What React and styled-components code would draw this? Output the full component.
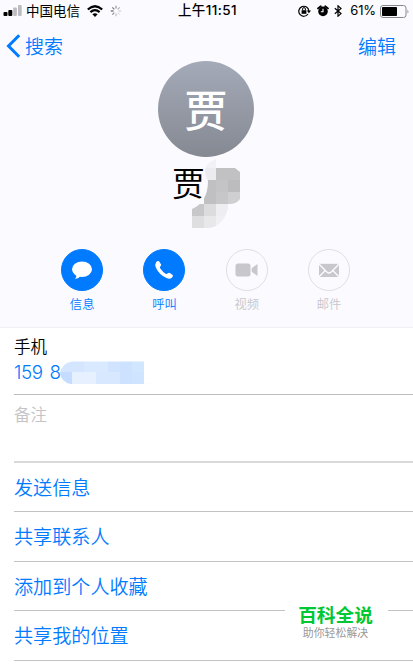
import React from 'react'
import styled, { createGlobalStyle } from 'styled-components'

const GlobalStyle = createGlobalStyle`
    * {
      box-sizing: border-box;
    }
    body {
      margin: 0;
      background: #fff;
      overflow: hidden;
      font-family: 'Liberation Sans', 'Noto Sans CJK SC', sans-serif;
    }
`

const Page = styled.div`
    width: 413px;
    height: 669px;
    overflow: hidden;
    background: #fff;
`

const Header = styled.header`
    height: 328px;
    background: #fafaff;
    border-bottom: 1px solid #f0f0f3;
    display: flex;
    flex-direction: column;
`

const StatusBar = styled.div`
    height: 22px;
    padding: 0 3px 0 3px;
    display: grid;
    grid-template-columns: 1fr auto 1fr;
    align-items: center;
    color: #000;
`

const StatusGroup = styled.div`
    display: flex;
    align-items: center;
    justify-content: ${props => props.$end ? 'flex-end' : 'flex-start'};
    gap: ${props => props.$gap}px;
`

const Carrier = styled.span`
    font-family: 'Noto Sans CJK SC', sans-serif;
    font-size: 13.5px;
    line-height: 20px;
    height: 22px;
    margin: 0 2px 0 -1px;
`

const Clock = styled.span`
    font-family: Inter, 'Noto Sans CJK SC', sans-serif;
    font-size: 13.5px;
    font-weight: 500;
    line-height: 20px;
    height: 22px;
    padding-left: 2px;
    letter-spacing: 0.4px;
`

const Percent = styled.span`
    font-family: Inter, sans-serif;
    font-size: 13px;
    line-height: 20px;
    height: 22px;
    letter-spacing: -0.1px;
    margin-left: 3px;
    margin-right: -1px;
`

const NavBar = styled.nav`
    height: 39px;
    padding: 0 17px 0 6px;
    display: flex;
    justify-content: space-between;
    align-items: flex-start;
`

const NavLink = styled.a`
    display: flex;
    align-items: center;
    gap: 4px;
    height: 47px;
    color: #007aff;
    font-family: 'Noto Sans CJK SC', sans-serif;
    font-size: 19px;
    font-weight: 350;
    line-height: 47px;
`

const Avatar = styled.div`
    width: 96px;
    height: 96px;
    margin-left: 158px;
    border-radius: 50%;
    background: linear-gradient(#a4aab8, #858992);
    color: #fff;
    font-family: 'Noto Sans CJK SC', sans-serif;
    font-size: 43.5px;
    font-weight: 500;
    line-height: 95px;
    text-align: center;
`

const NameRow = styled.div`
    height: 92px;
    margin-left: 172px;
    display: flex;
    align-items: flex-start;
`

const Name = styled.h1`
    margin: 0;
    width: 16px;
    white-space: nowrap;
    font-family: 'Noto Sans CJK SC', sans-serif;
    font-size: 33px;
    font-weight: 400;
    line-height: 51px;
`

const NameCover = styled.svg`
    position: relative;
    flex: none;
`

const Actions = styled.div`
    display: flex;
    padding-left: 41px;
`

const Action = styled.div`
    width: 82.3px;
    display: flex;
    flex-direction: column;
    align-items: center;
    color: ${props => props.$active ? '#007aff' : '#c7c7cc'};
    font-family: 'Noto Sans CJK SC', sans-serif;
    font-size: 12.3px;
    font-weight: 350;
    line-height: 26px;
`

const Circle = styled.div`
    width: 42px;
    height: 42px;
    border-radius: 50%;
    border: 1px solid ${props => props.$active ? '#007aff' : '#e0e0e4'};
    background: ${props => props.$active ? '#007aff' : 'transparent'};
    display: flex;
    align-items: center;
    justify-content: center;
`

const List = styled.main`
    padding-left: 14px;
`

const Phone = styled.section`
    height: 67px;
    border-bottom: 1px solid #bdbdbf;
`

const PhoneLabel = styled.div`
    height: 32px;
    padding-top: 5px;
    color: #000;
    font-family: 'Noto Sans CJK SC', sans-serif;
    font-size: 16.5px;
    font-weight: 350;
    line-height: 27px;
`

const PhoneNumber = styled.div`
    display: flex;
    align-items: flex-start;
    height: 26px;
    color: #007aff;
    font-family: Inter, sans-serif;
    font-size: 18.8px;
    font-weight: 350;
    line-height: 25px;
`

const Digits = styled.span`
    width: 46px;
    white-space: nowrap;
    letter-spacing: -0.4px;
    word-spacing: 2px;
`

const Note = styled.section`
    height: 68px;
    padding-top: 6px;
    border-bottom: 2px solid #d9d9dc;
    color: #c4c4c6;
    font-family: 'Noto Sans CJK SC', sans-serif;
    font-size: 16.5px;
    font-weight: 350;
    line-height: 27px;
`

const Row = styled.a`
    display: block;
    height: ${props => props.$height || 50}px;
    border-bottom: 1px solid #c3c3c6;
    color: #007aff;
    font-family: 'Noto Sans CJK SC', sans-serif;
    font-size: 19.1px;
    font-weight: 350;
    line-height: 48px;
`

const Watermark = styled.div`
    position: absolute;
    left: 285px;
    top: 598px;
    width: 103px;
    height: 46px;
    padding: 2px 2px 0 0;
    background: #fff;
    text-align: center;
    font-family: 'Noto Sans CJK SC', sans-serif;
`

const Brand = styled.div`
    color: #00c832;
    font-size: 18.7px;
    font-weight: 700;
    line-height: 28px;
`

const Slogan = styled.div`
    color: #999;
    font-size: 10.9px;
    line-height: 9px;
`

const SignalIcon = () => (
  <svg width="19" height="12" viewBox="0 0 19 12">
    <rect x="0.5" y="7" width="4" height="4" rx="1" fill="#000" />
    <rect x="5.3" y="5" width="4" height="6" rx="1" fill="#000" />
    <rect x="10.2" y="2.5" width="3.7" height="8.5" rx="1" fill="#bcbcc0" />
    <rect x="15" y="0" width="3.7" height="11" rx="1" fill="#bcbcc0" />
  </svg>
)

const WifiIcon = () => (
  <svg width="16" height="12" viewBox="0 0 16 12" fill="none" stroke="#000" strokeWidth="2.2">
    <path d="M0.8 4.5Q8-2 15.2 4.5" />
    <path d="M3.4 7.2Q8 3.2 12.6 7.2" />
    <path d="M8 12L5.4 9.3Q8 7.3 10.6 9.3Z" fill="#000" stroke="none" />
  </svg>
)

const SPOKES = ['#888', '#aaa', '#ccc', '#ddd', '#bbb', '#888', '#555', '#777']

const SpinnerIcon = () => (
  <svg width="14" height="12" viewBox="-8 -6 14 12">
    {SPOKES.map((color, i) => (
      <path key={i} d="M0-2.4V-5.2" stroke={color} strokeWidth="1.1" transform={`rotate(${i * 45})`} />
    ))}
  </svg>
)

const LockIcon = () => (
  <svg width="14" height="12" viewBox="0 0 14 12" fill="none" stroke="#000">
    <path d="M10 9A5 5 0 1 1 10.8 6" strokeWidth="1.2" />
    <path d="M8.8 5.5H13L10.9 8.3Z" fill="#000" stroke="none" />
    <rect x="3.6" y="5.2" width="4.8" height="3.6" fill="#000" stroke="none" />
    <path d="M4.6 5V4A1.4 1.4 0 0 1 7.4 4V5" />
  </svg>
)

const AlarmIcon = () => (
  <svg width="12" height="12" viewBox="0 0 12 12">
    <circle cx="6" cy="6.4" r="4.8" />
    <path d="M1 3.4L3.8 1.2M11 3.4L8.2 1.2" stroke="#000" strokeWidth="1.8" strokeLinecap="round" />
    <path d="M6 3.7V6.7H3.8" fill="none" stroke="#fff" strokeWidth="1.1" />
  </svg>
)

const BluetoothIcon = () => (
  <svg width="8" height="12" viewBox="0 0 8 12" fill="none" stroke="#000" strokeWidth="1.2">
    <path d="M0.8 3.2L7 8.6L4 11.2V0.8L7 3.4L0.8 8.8" />
  </svg>
)

const BatteryIcon = () => (
  <svg width="30" height="13" viewBox="0 0 30 13">
    <rect x="0.5" y="0.5" width="25.5" height="12" rx="2.5" fill="none" stroke="#88888c" />
    <rect x="2" y="2" width="15" height="9" rx="0.8" />
    <path d="M27.5 4.5Q29.3 6.5 27.5 8.5Z" fill="#88888c" />
  </svg>
)

const BackIcon = () => (
  <svg width="15" height="24" viewBox="0 0 15 24" fill="none" stroke="#007aff" strokeWidth="3">
    <path d="M13.2 1.2L2.5 12L13.2 22.8" />
  </svg>
)

const MessageIcon = () => (
  <svg width="22" height="20" viewBox="0 0 22 20" fill="#fff">
    <ellipse cx="11" cy="9.3" rx="10" ry="7.8" />
    <path d="M5 14Q6 17 3.9 19Q8 18.6 9.6 16Z" />
  </svg>
)

const CallIcon = () => (
  <svg width="20" height="20" viewBox="0 0 20 20" fill="#fff">
    <path d="M2.1 2.2Q3.6 0.4 5 1.2L7.1 4.4Q7.5 5.5 6.2 6.6Q5.6 7.3 6.3 8.4Q8.6 11.8 11.9 13.9Q12.8 14.3 13.4 13.6Q14.7 12.3 15.8 12.9L18.7 14.9Q19.5 16.1 17.8 17.7Q15.9 19.7 12.5 18.1Q5.2 14.8 1.8 7.5Q0.6 4.4 2.1 2.2Z" />
  </svg>
)

const VideoIcon = () => (
  <svg width="23" height="14" viewBox="0 0 23 14" fill="#c7c7cc">
    <rect x="0.5" y="0.5" width="15" height="13" rx="2.5" />
    <path d="M16.7 5.3L22.5 1V13L16.7 8.7Z" />
  </svg>
)

const MailIcon = () => (
  <svg width="22" height="15" viewBox="0 0 22 15">
    <rect x="1" y="0.8" width="20" height="13.2" fill="#c7c7cc" />
    <path d="M0.7 0.8L8.8 9Q11 11 13.2 9L21.3 0.8M0.7 14L7.3 7.5M21.3 14L14.7 7.5" fill="none" stroke="#fafaff" strokeWidth="1.4" />
  </svg>
)

const NAME_TILES = [
  ['', '#f2f2f6', '', ''],
  ['', '#ececf0', '#c1c1c3', '#c1c1c3'],
  ['', '#c0c0c2', '#c4c4c6', '#bcbcbe'],
  ['', '#c0c0c2', '#c7c7c9', '#cfcfd2'],
  ['#c7c7ca', '#dcdcdf', '#eeeef2', ''],
  ['#dedee1', '#e8e8eb', '#f0f0f4', '']
]

const NameMosaic = () => (
  <NameCover width="54" height="72" viewBox="188 157 54 72">
    <clipPath id="smudge">
      <path d="M216 159Q205 163 205 171Q205 176 208 181Q208 202 192 209V228H209Q225 226 229 204Q237 204 240 199V172L235 168H216Z" />
    </clipPath>
    <path d="M206 165H212V204H196V200Q207 197 208 184Z" fill="#fafaff" />
    <g clipPath="url(#smudge)" shapeRendering="crispEdges">
      {NAME_TILES.map((row, y) => row.map((color, x) => color && (
        <rect key={`${x}-${y}`} x={192 + x * 12} y={156 + y * 12} width="12" height="12" fill={color} />
      )))}
    </g>
  </NameCover>
)

const PHONE_TILES = [
  ['#d4e6ff', '#d4e6ff', '#d9e9ff', '#d9e9ff', '#d0e4ff', '#cce2ff', '#d1e6ff'],
  ['#c3dcff', '#e6f0ff', '#e6f0ff', '#d8e8ff', '#d8e8ff', '#cce2ff', '#cfe4ff']
]

const PhoneMosaic = () => (
  <svg width="96" height="25" viewBox="60 360 96 25">
    <clipPath id="pill">
      <path d="M72 361.5H144V384H71Q61 382 60 373Q62 363 72 361.5Z" />
    </clipPath>
    <path d="M66 380V384H156L144 383Z" fill="#fbfcfd" />
    <g clipPath="url(#pill)" shapeRendering="crispEdges">
      {PHONE_TILES.map((row, y) => row.map((color, x) => (
        <rect key={`${x}-${y}`} x={60 + x * 12} y={360 + y * 12} width="12" height="12" fill={color} />
      )))}
    </g>
  </svg>
)

const ACTIONS = [
  { label: '信息', icon: <MessageIcon />, active: true },
  { label: '呼叫', icon: <CallIcon />, active: true },
  { label: '视频', icon: <VideoIcon />, active: false },
  { label: '邮件', icon: <MailIcon />, active: false }
]

const App = () => {
  return (
    <Page>
      <GlobalStyle />
      <Header>
        <StatusBar>
          <StatusGroup $gap={5}>
            <SignalIcon />
            <Carrier>中国电信</Carrier>
            <WifiIcon />
            <SpinnerIcon />
          </StatusGroup>
          <Clock>上午11:51</Clock>
          <StatusGroup $end $gap={5}>
            <LockIcon />
            <AlarmIcon />
            <BluetoothIcon />
            <Percent>61%</Percent>
            <BatteryIcon />
          </StatusGroup>
        </StatusBar>
        <NavBar>
          <NavLink>
            <BackIcon />
            搜索
          </NavLink>
          <NavLink>编辑</NavLink>
        </NavBar>
        <Avatar>贾</Avatar>
        <NameRow>
          <Name>贾</Name>
          <NameMosaic />
        </NameRow>
        <Actions>
          {ACTIONS.map(({ label, icon, active }) => (
            <Action key={label} $active={active}>
              <Circle $active={active}>{icon}</Circle>
              {label}
            </Action>
          ))}
        </Actions>
      </Header>
      <List>
        <Phone>
          <PhoneLabel>手机</PhoneLabel>
          <PhoneNumber>
            <Digits>159 8</Digits>
            <PhoneMosaic />
          </PhoneNumber>
        </Phone>
        <Note>备注</Note>
        <Row $height={49}>发送信息</Row>
        <Row>共享联系人</Row>
        <Row $height={49}>添加到个人收藏</Row>
        <Row>共享我的位置</Row>
      </List>
      <Watermark>
        <Brand>百科全说</Brand>
        <Slogan>助你轻松解决</Slogan>
      </Watermark>
    </Page>
  )
}

export default App
